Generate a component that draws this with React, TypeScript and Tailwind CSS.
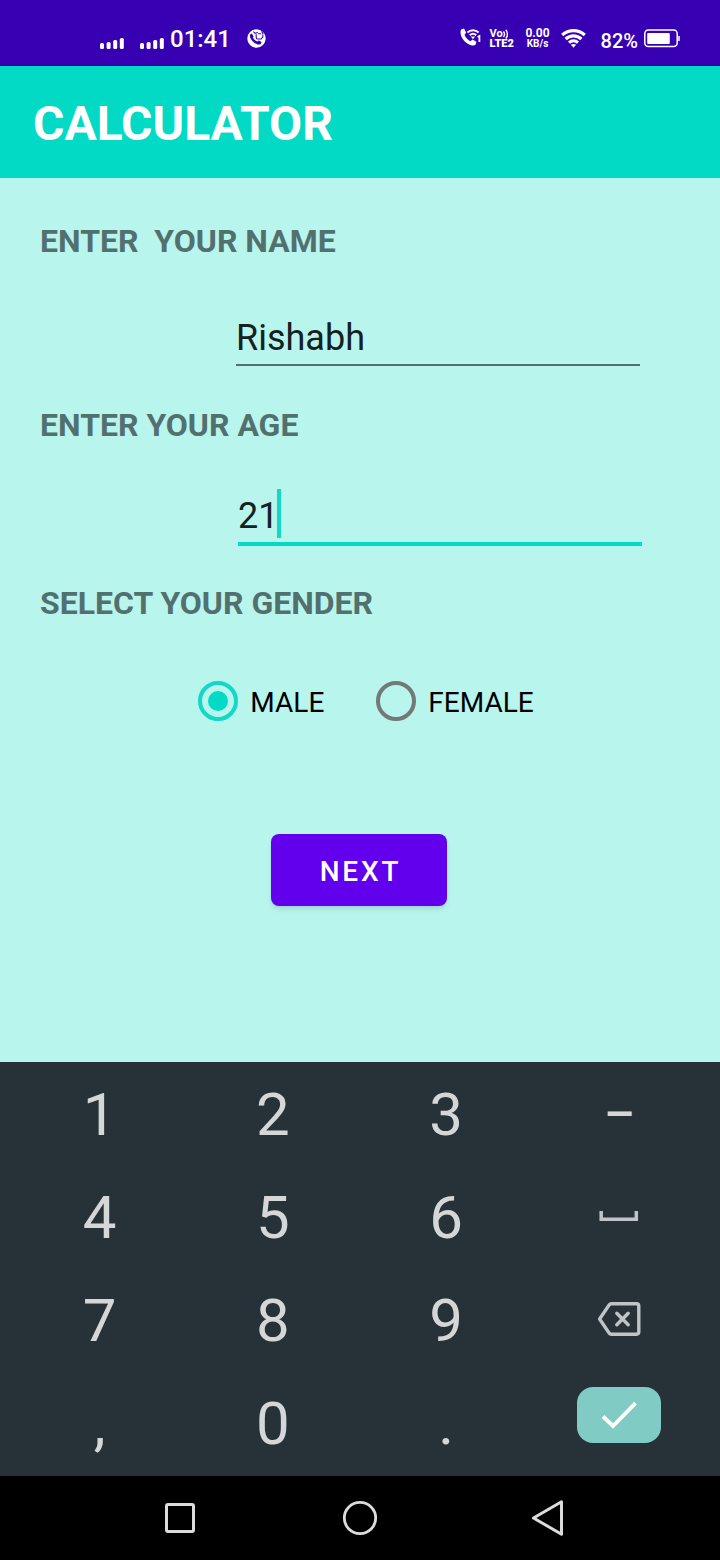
import { useState } from "react";

function SignalIcon() {
  return (
    <svg width="24" height="12" viewBox="0 0 24 12" fill="#fff" aria-hidden="true">
      <rect x="0" y="6" width="4" height="6" rx="1.5" />
      <rect x="6.6" y="5" width="4" height="7" rx="1.5" />
      <rect x="13.2" y="3" width="4" height="9" rx="1.5" />
      <rect x="19.8" y="1" width="4" height="11" rx="1.5" />
    </svg>
  );
}

function CallBadgeIcon() {
  return (
    <svg width="19" height="19" viewBox="0 0 19 19" aria-hidden="true">
      <circle cx="9.5" cy="9.5" r="9.2" fill="#fff" />
      <path
        d="M2.800 5.800L4.800 4.600L6.600 7.200L6 8.800C6.900 10.600 8.300 11.900 10.200 12.500L11.800 11.400L14.600 13L13.600 15.200C11.800 15.900 9.600 15.400 7.200 13.700C4.400 11.600 2.600 8.900 2.800 5.800Z"
        fill="#3700b3"
      />
      <path d="M6.400 2.600L8.200 4.400L10.800 3.200M14.600 2.400L16.200 5M9.200 5.200V8.600Q9.200 10 10.600 10H14.200L15.800 8V5.400M11 4.800H14" fill="none" stroke="#3700b3" strokeWidth="1.100" />
    </svg>
  );
}

function WifiCallIcon() {
  return (
    <svg width="21" height="19" viewBox="0 0 21 19" aria-hidden="true">
      <path
        d="M1.2 1.500L4 .6L6.200 4.800L4.500 6.800C5.600 9.600 7.600 11.800 10.400 13.200L12.400 11.600L16.400 13.800L15.700 16.600C14.900 17.400 13.600 17.700 12.400 17.500C6.500 16.400 1.500 11.200.6 5.400C.4 4 .6 2.500 1.200 1.500Z"
        fill="#fff"
      />
      <path d="M7.400 4.500C10.600 1.500 15.400 1.500 18.600 4.500M9.800 7.200C11.700 5.500 14.300 5.500 16.200 7.200" fill="none" stroke="#fff" strokeWidth="2" />
      <path d="M10.800 8.600H15.200L13 11.200Z" fill="#fff" />
      <path d="M17.600 9L19.400 8V14" fill="none" stroke="#fff" strokeWidth="1.800" />
    </svg>
  );
}

function WifiIcon() {
  return (
    <svg width="25" height="19" viewBox="0 0 25 19" aria-hidden="true">
      <g fill="none" stroke="#fff" strokeWidth="3.100">
        <path d="M1.200 6C7.600 .2 17.400 .2 23.800 6" />
        <path d="M4.600 10C9.200 5.800 15.800 5.800 20.400 10" />
        <path d="M8 13.600C10.600 11.300 14.400 11.300 17 13.600" />
      </g>
      <path d="M9.900 15.800C11.400 14.700 13.600 14.700 15.100 15.800L12.500 18.800Z" fill="#fff" />
    </svg>
  );
}

function BatteryIcon() {
  return (
    <svg width="36" height="19" viewBox="0 0 36 19" aria-hidden="true">
      <rect x=".8" y="1" width="32.400" height="16.600" rx="3.500" fill="none" stroke="#fff" strokeWidth="1.500" />
      <rect x="3.200" y="4" width="22.600" height="11" rx="1" fill="#fff" />
      <path d="M35 7V12" stroke="#fff" strokeWidth="1.500" />
    </svg>
  );
}

function StatusBar() {
  return (
    <header className="flex h-[66px] items-center justify-between bg-[#3700b3] pt-3 pr-10 pl-[100px] text-white">
      <div className="flex items-center gap-4 pb-px">
        <div className="flex items-center">
          <div className="flex gap-4 pt-2 pr-1.5">
            <SignalIcon />
            <SignalIcon />
          </div>
          <span className="text-2xl font-medium">01:41</span>
        </div>
        <CallBadgeIcon />
      </div>
      <div className="flex items-center">
        <div className="pb-1">
          <WifiCallIcon />
        </div>
        <div className="ml-[9px] flex w-7 flex-col">
          <div className="flex items-center text-[11px] leading-[10px] font-bold">
            <span>Vo</span>
            <svg width="6" height="10" viewBox="0 0 6 10" fill="none" stroke="#fff" strokeWidth="1.400" aria-hidden="true">
              <path d="M.5 2.500C1.600 4 1.600 6.500.5 8M2.800.8C4.900 3 4.900 7.500 2.800 9.600" />
            </svg>
          </div>
          <span className="text-[11px] leading-[10px] font-black">LTE2</span>
        </div>
        <div className="ml-2 flex w-6 flex-col items-center pb-px font-bold">
          <span className="text-xs leading-[11px]">0.00</span>
          <span className="text-[10px] leading-[10px]">KB/s</span>
        </div>
        <div className="ml-[11px] pb-0.5">
          <WifiIcon />
        </div>
        <span className="ml-[15px] pt-1 text-xl leading-6 font-medium">82%</span>
        <div className="ml-1.5 pb-px">
          <BatteryIcon />
        </div>
      </div>
    </header>
  );
}

const genders = ["MALE", "FEMALE"];

const labelClass = "block text-[32px] leading-10 font-bold whitespace-pre text-[#52706d]";

function Form() {
  const [name, setName] = useState("Rishabh");
  const [age, setAge] = useState("21");
  const [gender, setGender] = useState("MALE");

  return (
    <main className="flex-1 bg-[#b8f5ed] px-10 pt-[43px] pb-10">
      <label htmlFor="name" className={labelClass}>
        {"ENTER  YOUR NAME"}
      </label>
      <div className="mt-[53px] mr-10 ml-[196px] border-b-2 border-[#52706d] pb-0.5">
        <input
          id="name"
          value={name}
          onChange={(e) => setName(e.target.value)}
          className="block h-12 w-full bg-transparent text-4xl text-[#16211f] outline-none"
        />
      </div>

      <label htmlFor="age" className={`${labelClass} mt-[39px]`}>
        ENTER YOUR AGE
      </label>
      <div className="relative mt-[47px] mr-[38px] ml-[198px] border-b-4 border-[#03dac5] pb-0.5">
        <input
          id="age"
          inputMode="numeric"
          value={age}
          onChange={(e) => setAge(e.target.value)}
          className="block h-12 w-full bg-transparent text-4xl text-[#16211f] caret-[#03dac5] outline-none"
        />
        <span className="absolute bottom-1 left-[39px] h-[49px] w-1 bg-[#12d8c5]" aria-hidden="true" />
      </div>

      <fieldset>
        <legend className={`${labelClass} pt-[37px]`}>SELECT YOUR GENDER</legend>
        <div className="mt-[58px] flex justify-center gap-[52px] pl-3">
          {genders.map((g) => (
            <label key={g} className="flex items-center gap-3 text-[28px] leading-10 text-black">
              <input
                type="radio"
                name="gender"
                value={g}
                checked={gender === g}
                onChange={() => setGender(g)}
                className="flex size-10 appearance-none items-center justify-center rounded-full border-4 border-[#727977] before:size-5 before:rounded-full checked:border-[#12d8c5] checked:before:bg-[#03dac5]"
              />
              <span className="pt-[3px] leading-[37px]">{g}</span>
            </label>
          ))}
        </div>
      </fieldset>

      <div className="mt-[113px] flex justify-center pr-0.5">
        <button
          type="button"
          className="h-[72px] w-44 rounded-lg bg-[#6200ee] pt-[3px] pl-[3px] text-[28px] font-medium tracking-widest text-white shadow-md"
        >
          NEXT
        </button>
      </div>
    </main>
  );
}

function SpaceIcon() {
  return (
    <svg width="40" height="12" viewBox="0 0 40 12" fill="none" stroke="#c0c4c6" strokeWidth="3.500" aria-hidden="true">
      <path d="M2.200 1V9.300H37.300V1" />
    </svg>
  );
}

function BackspaceIcon() {
  return (
    <svg width="44" height="36" viewBox="0 0 44 36" fill="none" stroke="#c0c4c6" strokeWidth="3.400" strokeLinejoin="round" strokeLinecap="round" aria-hidden="true">
      <path d="M14.500 2.800H39.400Q41.800 2.800 41.800 5.200V30.800Q41.800 33.200 39.400 33.200H14.500Q13 33.200 12 31.900L2.600 18L12 4.100Q13 2.800 14.500 2.800Z" />
      <path d="M19.800 12.200L31.200 23.800M31.200 12.200L19.800 23.800" />
    </svg>
  );
}

function Keypad() {
  const key = "flex items-center justify-center text-6xl text-[#d4d6d7]";
  const iconKey = "flex items-center justify-center pb-1";
  const rows = [
    ["1", "2", "3"],
    ["4", "5", "6"],
    ["7", "8", "9"],
    [",", "0", "."],
  ];
  const actions = [
    <button key="dash" type="button" className="flex items-center justify-center text-5xl font-medium text-[#d4d6d7]">
      –
    </button>,
    <button key="space" type="button" aria-label="Space" className={iconKey}>
      <SpaceIcon />
    </button>,
    <button key="back" type="button" aria-label="Backspace" className={iconKey}>
      <BackspaceIcon />
    </button>,
    <button key="done" type="button" aria-label="Done" className="flex items-center justify-center pb-[18px]">
      <span className="flex h-14 w-21 items-center justify-center rounded-2xl bg-[#80cbc4]">
        <svg width="36" height="28" viewBox="0 0 36 28" fill="none" stroke="#fff" strokeWidth="3.800" aria-hidden="true">
          <path d="M2 15.500L12 25L34.500 2.200" />
        </svg>
      </span>
    </button>,
  ];
  return (
    <section className="grid auto-rows-[103px] grid-cols-4 bg-[#273238] pt-px pr-[14px] pb-px pl-[13px]">
      {rows.flatMap((row, i) => [
        ...row.map((k) => (
          <button key={k} type="button" className={key}>
            {k}
          </button>
        )),
        actions[i],
      ])}
    </section>
  );
}

function NavBar() {
  return (
    <nav className="flex h-21 items-center justify-center gap-[140px] bg-black pl-4">
      <button type="button" aria-label="Recent apps" className="flex w-10 justify-center">
        <svg width="30" height="30" viewBox="0 0 30 30" fill="none" stroke="#dcdcdc" strokeWidth="3">
          <rect x="1.500" y="1.500" width="27" height="27" rx="1.500" />
        </svg>
      </button>
      <button type="button" aria-label="Home" className="flex w-10 justify-center">
        <svg width="36" height="36" viewBox="0 0 36 36" fill="none" stroke="#dcdcdc" strokeWidth="2.800">
          <circle cx="18" cy="18" r="15.700" />
        </svg>
      </button>
      <button type="button" aria-label="Back" className="flex w-14 justify-center">
        <svg width="36" height="36" viewBox="0 0 36 36" fill="none" stroke="#dcdcdc" strokeWidth="3" strokeLinejoin="round">
          <path d="M31.500 1.800V34.200L3.500 18Z" />
        </svg>
      </button>
    </nav>
  );
}

export default function App() {
  return (
    <div className="flex min-h-screen flex-col font-[Roboto,sans-serif]">
      <StatusBar />
      <div className="flex h-28 items-center bg-[#03dac5] px-[33px] pt-[3px]">
        <h1 className="text-5xl font-bold text-white">CALCULATOR</h1>
      </div>
      <Form />
      <Keypad />
      <NavBar />
    </div>
  );
}
